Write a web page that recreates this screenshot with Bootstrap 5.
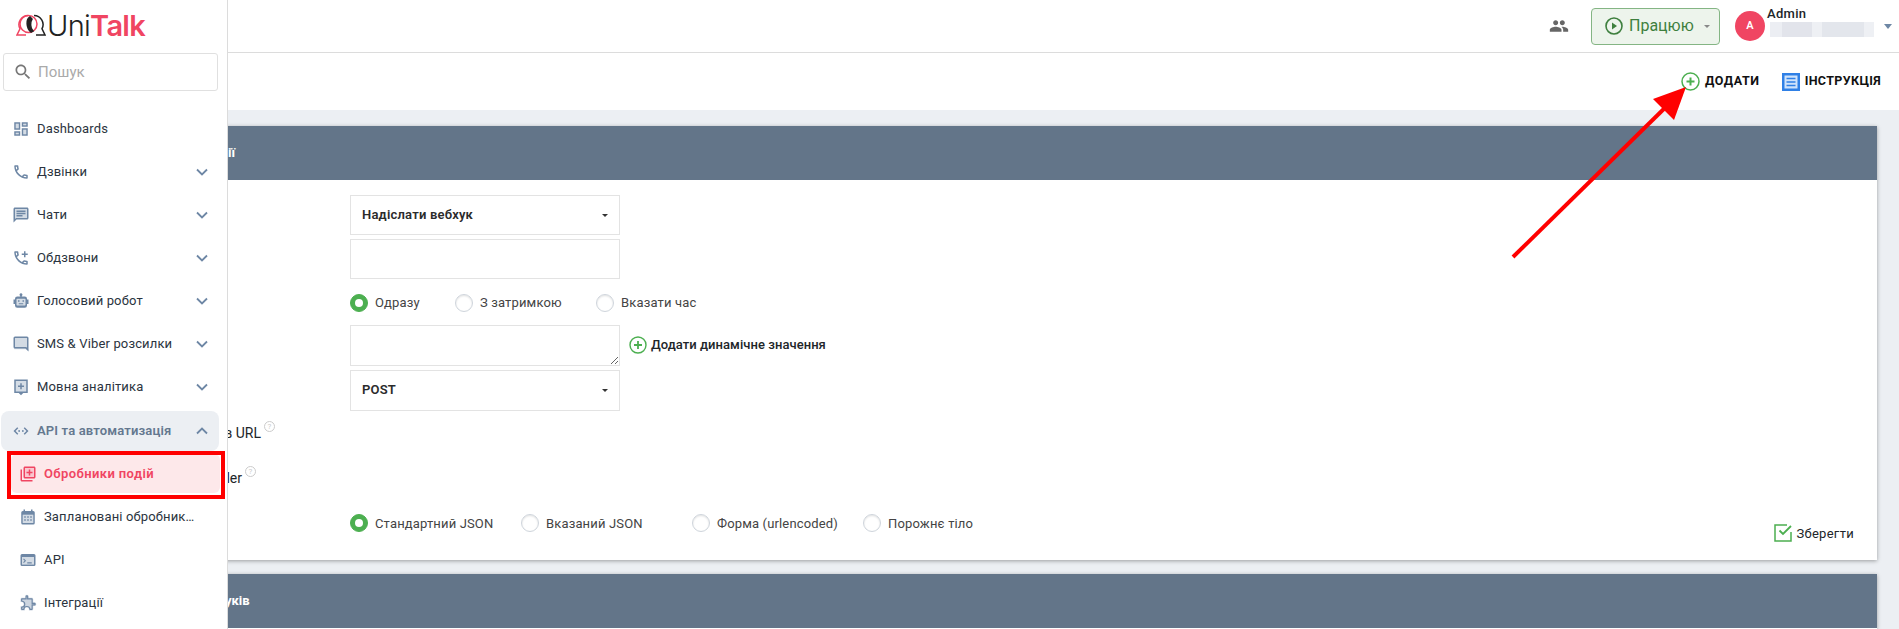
<!DOCTYPE html>
<html lang="uk">
<head>
<meta charset="utf-8">
<title>UniTalk</title>
<link href="https://cdn.jsdelivr.net/npm/bootstrap@5.3.0/dist/css/bootstrap.min.css" rel="stylesheet">
<style>
html,body{height:629px;overflow:hidden;}
body{position:relative;background:#eceff3;font-family:Roboto,"Liberation Sans",sans-serif;color:#212529;}
.side-panel{position:absolute;left:0;top:0;bottom:0;width:228px;background:#fff;border-right:1px solid #dcdcdc;z-index:5;}
.logo-row{height:53px;padding:14px 0 0 16px;gap:1px;}
.logo-word{font-family:Inter,Roboto,sans-serif;font-size:29px;line-height:24px;font-weight:300;color:#222;letter-spacing:-.7px;}
.logo-word b{font-weight:600;color:#f04562;}
.search-box{margin-left:3px;width:215px;height:38px;border:1px solid #e0e0e0;border-radius:3px;padding-left:9px;gap:5px;color:#aaa;font-size:15px;}
.menu-list{margin-top:16px;padding:0;list-style:none;}
.menu-line{height:43px;padding:0 17px 0 12px;gap:7px;font-size:13px;letter-spacing:.15px;color:#2b3440;}
.menu-line .ico{width:18px;height:18px;flex:none;color:#6e87a5;}
.menu-line .chev{width:16px;height:16px;margin-left:auto;flex:none;color:#6e87a5;}
.menu-open{margin:3px 8px 0 1px;height:40px;padding:0 9px 0 11px;border-radius:8px;background:#eceff3;color:#64788f;font-weight:600;}
.menu-sub{padding-left:19px;}
.menu-sel{margin:3px 7px 2px 11px;height:39px;padding:0 8px;border-radius:6px;background:#fde8ea;color:#f04562;font-weight:600;letter-spacing:.4px;}
.menu-sel .ico{color:#f04562;}
.red-frame{position:absolute;left:7px;top:451px;width:218px;height:48px;border:4px solid #f00;z-index:6;}
.top-strip{height:53px;background:#fff;border-bottom:1px solid #dcdcdc;padding-right:7px;}
.people-ico{width:20px;height:20px;color:#666;margin-right:22px;}
.work-btn{width:129px;height:37px;padding:0 0 0 13px;gap:6px;background:#edf4ec;border:1px solid #84b584;border-radius:4px;color:#3e7f3e;font-size:16px;margin-right:15px;}
.work-btn::after{margin-left:auto;margin-right:9px;color:#888;border-top-width:.22em;border-left-width:.22em;border-right-width:.22em;}
.avatar-dot{width:30px;height:30px;border-radius:50%;background:#f04562;color:#fff;font-size:11px;font-weight:600;}
.admin-block{width:110px;margin-left:2px;font-size:13px;line-height:13px;font-weight:500;letter-spacing:.3px;margin-top:-9px;}
.blur-bar{display:block;width:104px;height:15px;margin:2px 0 0 3px;background:linear-gradient(90deg,#eceef3 0 12%,#e2e4eb 12% 40%,#eef0f4 40% 50%,#e3e6ec 50% 90%,#eef0f4 90%);}
.admin-caret{width:0;height:0;border:4.5px solid transparent;border-top:5px solid #6e87a5;border-bottom:0;margin-left:7px;}
.action-strip{height:57px;background:#fff;padding-right:18px;gap:22px;font-size:12.5px;font-weight:700;letter-spacing:.35px;color:#111;}
.action-strip .act{gap:5px;}
.act-add{letter-spacing:.6px;}
.sheet{margin:16px 22px 14px 20px;border:0;border-radius:0;box-shadow:0 1px 4px rgba(0,0,0,.35);}
.sheet+.sheet{margin:14px 22px 0 20px;}
.sheet-head{height:54px;background:#637589;color:#fff;font-size:13px;font-weight:700;border:0;border-radius:0!important;}
.head-a{padding:0 0 0 208px;}
.head-b{padding:0 0 0 205px;}
.sheet-body{padding:15px 23px 17px 0;}
.blank-body{height:1px;padding:0;}
.f-row{display:flex;align-items:center;}
.f-lab{width:330px;flex:none;font-size:14px;text-align:right;white-space:nowrap;}
.f-box{width:270px;height:40px;border:1px solid #e3e3e3;border-radius:0;background:#fff;box-shadow:none;}
.pick{display:flex;align-items:center;justify-content:space-between;padding:0 11px;font-size:13px;font-weight:600;letter-spacing:.2px;color:#2b2b2b;}
.pick:hover,.pick:active{background:#fff!important;border-color:#e3e3e3!important;color:#2b2b2b!important;}
.pick::after{color:#333;border-top-width:.28em;border-left-width:.28em;border-right-width:.28em;}
.tall{height:41px;}
.radio-set{display:flex;align-items:center;font-size:13px;letter-spacing:.15px;color:#444;}
.radio-set label{display:flex;align-items:center;gap:7px;white-space:nowrap;}
.form-check-input.rd{width:18px;height:18px;margin:0;flex:none;border:1px solid #cfd5dc;box-shadow:inset 0 1px 2px rgba(0,0,0,.12);}
.form-check-input.rd:checked{background-color:#4caf50;border-color:#4caf50;box-shadow:none;background-size:auto;}
.r105{width:105px;}.r141{width:141px;}.r171{width:171px;}
.dyn{margin-left:9px;gap:4px;font-size:13px;font-weight:500;letter-spacing:.05px;}
.tip-q{width:11px;height:11px;border:1px solid #ccc;border-radius:50%;font-size:8px;line-height:9px;color:#ccc;text-align:center;margin:-14px 0 0 3px;flex:none;}
.save-link{margin-left:auto;margin-top:10px;gap:3px;font-size:13px;letter-spacing:.3px;}
.mark-arrow{position:absolute;left:1500px;top:80px;z-index:4;}
.radio-row-a{margin-top:14px;}
.ta-row{margin-top:12px;}
.row-url{height:20px;margin-top:13px;}
.row-han{height:20px;margin-top:25px;}
.row-last{margin-top:25px;}
.lab-a{width:241px;}
.lab-b{width:222px;}
</style>
</head>
<body>
<aside class="side-panel">
  <div class="logo-row d-flex align-items-start">
    <svg width="30" height="24" viewBox="0 0 30 24" fill="none" stroke-width="1.5"><path d="M12 1.500a9 9 0 0 0-8 13.200L1 21h9" stroke="#f04562"/><path d="M18 1.500a9 9 0 0 1 8 13.200l3 6.300h-9" stroke="#222"/><circle cx="12.500" cy="10" r="8.500" stroke="#f04562"/><path d="M14 3c-4 2-4 11 1 15l2-1c-3-3-3-9-1-12z" fill="#222" stroke="#222"/></svg>
    <span class="logo-word">Uni<b>Talk</b></span>
  </div>
  <div class="search-box d-flex align-items-center">
    <svg width="20" height="20" viewBox="0 0 24 24" fill="#777"><path d="M15.500 14h-.79l-.28-.27C15.410 12.590 16 11.110 16 9.500 16 5.910 13.090 3 9.500 3S3 5.910 3 9.500 5.910 16 9.500 16c1.610 0 3.090-.59 4.230-1.570l.27.28v.79l5 4.990L20.490 19l-4.990-5zm-6 0C7.010 14 5 11.990 5 9.500S7.010 5 9.500 5 14 7.010 14 9.500 11.990 14 9.500 14z"/></svg>
    <span>Пошук</span>
  </div>
  <ul class="menu-list">
    <li class="menu-line d-flex align-items-center"><svg class="ico" viewBox="0 0 24 24" fill="currentColor"><path d="M5 5h4v6H5zM15 5h4v2h-4zM15 13h4v6h-4zM5 17h4v2H5z" opacity=".3"/><path d="M19 5v2h-4V5h4M9 5v6H5V5h4m10 8v6h-4v-6h4M9 17v2H5v-2h4M21 3h-8v6h8V3zM11 3H3v10h8V3zm10 8h-8v10h8V11zm-10 4H3v6h8v-6z"/></svg><span>Dashboards</span></li>
    <li class="menu-line d-flex align-items-center"><svg class="ico" viewBox="0 0 24 24" fill="currentColor"><path d="M6.540 5c.06.89.21 1.760.45 2.590l-1.200 1.200c-.41-1.200-.67-2.470-.76-3.790h1.510m9.860 12.020c.85.24 1.720.39 2.600.45v1.490c-1.320-.09-2.590-.35-3.800-.75l1.200-1.190M7.500 3H4c-.55 0-1 .45-1 1 0 9.390 7.610 17 17 17 .55 0 1-.45 1-1v-3.490c0-.55-.45-1-1-1-1.240 0-2.450-.2-3.570-.57-.1-.04-.21-.05-.31-.05-.26 0-.51.1-.71.29l-2.200 2.200c-2.830-1.450-5.150-3.760-6.590-6.590l2.200-2.200c.28-.28.36-.67.25-1.020C8.700 6.450 8.500 5.250 8.500 4c0-.55-.45-1-1-1z"/></svg><span>Дзвінки</span><svg class="chev" viewBox="0 0 16 16" fill="none" stroke="currentColor" stroke-width="1.800"><path d="M3 5.500l5 5 5-5"/></svg></li>
    <li class="menu-line d-flex align-items-center"><svg class="ico" viewBox="0 0 24 24" fill="currentColor"><path d="M4 4h16v12H5.170L4 17.170z" opacity=".3"/><path d="M20 2H4c-1.100 0-2 .9-2 2v18l4-4h14c1.100 0 2-.9 2-2V4c0-1.100-.9-2-2-2zm0 14H5.170L4 17.170V4h16v12zM6 12h8v2H6zm0-3h12v2H6zm0-3h12v2H6z"/></svg><span>Чати</span><svg class="chev" viewBox="0 0 16 16" fill="none" stroke="currentColor" stroke-width="1.800"><path d="M3 5.500l5 5 5-5"/></svg></li>
    <li class="menu-line d-flex align-items-center"><svg class="ico" viewBox="0 0 24 24" fill="currentColor"><path d="M6.540 5c.06.89.21 1.760.45 2.590l-1.200 1.200c-.41-1.200-.67-2.470-.76-3.790h1.510m9.860 12.020c.85.24 1.720.39 2.600.45v1.490c-1.320-.09-2.590-.35-3.800-.75l1.200-1.190M7.500 3H4c-.55 0-1 .45-1 1 0 9.390 7.610 17 17 17 .55 0 1-.45 1-1v-3.490c0-.55-.45-1-1-1-1.240 0-2.450-.2-3.570-.57-.1-.04-.21-.05-.31-.05-.26 0-.51.1-.71.29l-2.200 2.200c-2.830-1.450-5.150-3.760-6.590-6.590l2.200-2.200c.28-.28.36-.67.25-1.020C8.700 6.450 8.500 5.250 8.500 4c0-.55-.45-1-1-1zM16 3h2v3h3v2h-3v3h-2V8h-3V6h3z"/></svg><span>Обдзвони</span><svg class="chev" viewBox="0 0 16 16" fill="none" stroke="currentColor" stroke-width="1.800"><path d="M3 5.500l5 5 5-5"/></svg></li>
    <li class="menu-line d-flex align-items-center"><svg class="ico" viewBox="0 0 24 24" fill="currentColor"><path d="M12 1.500a2 2 0 0 1 1 3.700V6h4a3 3 0 0 1 3 3v1h2v6h-2v2a3 3 0 0 1-3 3H7a3 3 0 0 1-3-3v-2H2v-6h2V9a3 3 0 0 1 3-3h4v-.8a2 2 0 0 1 1-3.700z"/><path d="M7 9h10a1 1 0 0 1 1 1v7a1 1 0 0 1-1 1H7a1 1 0 0 1-1-1v-7a1 1 0 0 1 1-1z" fill="#d5dde6"/><path d="M8 11h2v2H8zM14 11h2v2h-2zM9 15h6v1.300H9z"/></svg><span>Голосовий робот</span><svg class="chev" viewBox="0 0 16 16" fill="none" stroke="currentColor" stroke-width="1.800"><path d="M3 5.500l5 5 5-5"/></svg></li>
    <li class="menu-line d-flex align-items-center"><svg class="ico" viewBox="0 0 24 24" fill="currentColor"><path d="M3 3h18v16h1v2l-3-2H3z" opacity=".3"/><path d="M4 2h16a2 2 0 0 1 2 2v18l-4-4H4a2 2 0 0 1-2-2V4a2 2 0 0 1 2-2zm0 2v12h15l1 1V4z"/></svg><span>SMS &amp; Viber розсилки</span><svg class="chev" viewBox="0 0 16 16" fill="none" stroke="currentColor" stroke-width="1.800"><path d="M3 5.500l5 5 5-5"/></svg></li>
    <li class="menu-line d-flex align-items-center"><svg class="ico" viewBox="0 0 24 24" fill="currentColor"><path d="M3 2h18v18h-6l-3 3-3-3H3z"/><path d="M5 4h14v14H5z" fill="#d5dde6"/><path d="M11 7h2v3h3v2h-3v3h-2v-3H8v-2h3z"/></svg><span>Мовна аналітика</span><svg class="chev" viewBox="0 0 16 16" fill="none" stroke="currentColor" stroke-width="1.800"><path d="M3 5.500l5 5 5-5"/></svg></li>
    <li class="menu-line menu-open d-flex align-items-center"><svg class="ico" viewBox="0 0 24 24" fill="currentColor"><path d="M7 7l1.400 1.400L4.800 12l3.600 3.600L7 17l-5-5zM17 7l-1.400 1.400 3.600 3.600-3.600 3.600L17 17l5-5z"/><circle cx="9.500" cy="12" r="1.200"/><circle cx="14.500" cy="12" r="1.200"/></svg><span>API та автоматизація</span><svg class="chev" viewBox="0 0 16 16" fill="none" stroke="currentColor" stroke-width="1.800"><path d="M3 10.500l5-5 5 5"/></svg></li>
    <li class="menu-line menu-sel d-flex align-items-center"><svg class="ico" viewBox="0 0 24 24" fill="currentColor"><path d="M8 4h12v12H8z" opacity=".2"/><path d="M4 6H2v14c0 1.100.9 2 2 2h14v-2H4V6zm16-4H8c-1.100 0-2 .9-2 2v12c0 1.100.9 2 2 2h12c1.100 0 2-.9 2-2V4c0-1.100-.9-2-2-2zm0 14H8V4h12v12zm-7-2h2v-3h3V9h-3V6h-2v3h-3v2h3z"/></svg><span>Обробники подій</span></li>
    <li class="menu-line menu-sub d-flex align-items-center"><svg class="ico" viewBox="0 0 24 24" fill="currentColor"><path d="M5 9h14v11H5z" opacity=".3"/><path d="M19 4h-1V2h-2v2H8V2H6v2H5a2 2 0 0 0-2 2v14a2 2 0 0 0 2 2h14a2 2 0 0 0 2-2V6a2 2 0 0 0-2-2zm0 16H5V9h14zM7 11h2v2H7zm4 0h2v2h-2zm4 0h2v2h-2zm-8 4h2v2H7zm4 0h2v2h-2zm4 0h2v2h-2z"/></svg><span>Заплановані обробник…</span></li>
    <li class="menu-line menu-sub d-flex align-items-center"><svg class="ico" viewBox="0 0 24 24" fill="currentColor"><path d="M4 8h16v10H4z" opacity=".3"/><path d="M20 4H4a2 2 0 0 0-2 2v12a2 2 0 0 0 2 2h16a2 2 0 0 0 2-2V6a2 2 0 0 0-2-2zm0 14H4V8h16zM6.500 10l3 3-3 3-1-1 2-2-2-2zM11 15h6v1.500h-6z"/></svg><span>API</span></li>
    <li class="menu-line menu-sub d-flex align-items-center"><svg class="ico" viewBox="0 0 24 24" fill="currentColor"><path d="M20.500 11H19V7c0-1.100-.9-2-2-2h-4V3.500C13 2.120 11.880 1 10.500 1S8 2.120 8 3.500V5H4c-1.100 0-1.990.9-1.990 2v3.800H3.500c1.490 0 2.700 1.210 2.700 2.700s-1.210 2.700-2.700 2.700H2V20c0 1.100.9 2 2 2h3.800v-1.500c0-1.490 1.210-2.700 2.700-2.700 1.490 0 2.700 1.210 2.700 2.700V22H17c1.100 0 2-.9 2-2v-4h1.500c1.380 0 2.500-1.120 2.500-2.500S21.880 11 20.500 11z" opacity=".35"/><path d="M10.500 2.500c.55 0 1 .45 1 1v3H17a.5.500 0 0 1 .5.500v5.500h3a1 1 0 0 1 0 2h-3V20a.5.500 0 0 1-.5.500h-2.300c-.3-2.200-2-3.900-4.200-3.900s-3.900 1.700-4.200 3.900H4a.5.500 0 0 1-.5-.5v-2.400c2.200-.3 4.200-2 4.200-4.100s-2-3.800-4.200-4.100V7a.5.500 0 0 1 .5-.5h5.500v-3c0-.55.45-1 1-1z" fill="none" stroke="currentColor" stroke-width="1.500"/></svg><span>Інтеграції</span></li>
  </ul>
</aside>
<div class="red-frame"></div>

<header class="top-strip d-flex align-items-center justify-content-end">
  <svg class="people-ico" viewBox="0 0 24 24" fill="currentColor"><path d="M16 11c1.660 0 2.990-1.340 2.990-3S17.660 5 16 5c-1.660 0-3 1.340-3 3s1.340 3 3 3zm-8 0c1.660 0 2.990-1.340 2.990-3S9.660 5 8 5C6.340 5 5 6.340 5 8s1.340 3 3 3zm0 2c-2.330 0-7 1.170-7 3.500V19h14v-2.500c0-2.330-4.670-3.500-7-3.500zm8 0c-.29 0-.62.02-.97.05 1.160.84 1.970 1.970 1.970 3.450V19h6v-2.500c0-2.330-4.670-3.500-7-3.500z"/></svg>
  <button type="button" class="btn dropdown-toggle work-btn d-flex align-items-center">
    <svg width="18" height="18" viewBox="0 0 18 18" fill="none" stroke="currentColor" stroke-width="1.600"><circle cx="9" cy="9" r="8"/><path d="M7 5.500l5 3.500-5 3.500z" fill="currentColor" stroke="none"/></svg>
    <span>Працюю</span>
  </button>
  <span class="avatar-dot d-flex align-items-center justify-content-center">A</span>
  <span class="admin-block"><span>Admin</span><span class="blur-bar"></span></span>
  <span class="admin-caret"></span>
</header>

<div class="action-strip d-flex align-items-center justify-content-end">
  <span class="act act-add d-flex align-items-center">
    <svg width="19" height="19" viewBox="0 0 19 19" fill="none" stroke="#4caf50" stroke-width="1.500"><circle cx="9.500" cy="9.500" r="8.500"/><path d="M9.500 5.500v8M5.500 9.500h8" stroke-width="2"/></svg>ДОДАТИ
  </span>
  <span class="act d-flex align-items-center">
    <svg width="18" height="18" viewBox="0 0 18 18"><rect width="18" height="18" fill="#2f80e6"/><rect x="2.500" y="2.500" width="13" height="13" fill="#cfe3fb"/><path d="M4.500 5.500h9M4.500 9h9M4.500 12.500h9" stroke="#2f80e6" stroke-width="1.500"/></svg>ІНСТРУКЦІЯ
  </span>
</div>

<svg class="mark-arrow" width="200" height="190" viewBox="0 0 200 190"><path d="M13 177L175 18" stroke="#f00" stroke-width="4" fill="none"/><path d="M186 7l-12 33-21-21z" fill="#f00"/></svg>

<main>
  <section class="card sheet">
    <div class="card-header sheet-head head-a d-flex align-items-center">ії</div>
    <div class="card-body sheet-body">
      <div class="f-row"><div class="f-lab"></div><button type="button" class="btn dropdown-toggle f-box pick">Надіслати вебхук</button></div>
      <div class="f-row mt-1"><div class="f-lab"></div><input type="text" class="form-control f-box" aria-label="URL"></div>
      <div class="f-row radio-row-a"><div class="f-lab"></div>
        <div class="radio-set">
          <label class="r105"><input class="form-check-input rd" type="radio" name="t" checked>Одразу</label>
          <label class="r141"><input class="form-check-input rd" type="radio" name="t">З затримкою</label>
          <label><input class="form-check-input rd" type="radio" name="t">Вказати час</label>
        </div>
      </div>
      <div class="f-row ta-row"><div class="f-lab"></div><textarea class="form-control f-box tall" aria-label="Body"></textarea>
        <span class="dyn d-flex align-items-center"><svg width="18" height="18" viewBox="0 0 18 18" fill="none" stroke="#4caf50" stroke-width="1.400"><circle cx="9" cy="9" r="8"/><path d="M9 5v8M5 9h8" stroke-width="1.800"/></svg>Додати динамічне значення</span>
      </div>
      <div class="f-row mt-1"><div class="f-lab"></div><button type="button" class="btn dropdown-toggle f-box pick tall">POST</button></div>
      <div class="f-row row-url"><div class="f-lab lab-a">в URL</div><span class="tip-q">?</span></div>
      <div class="f-row row-han"><div class="f-lab lab-b">ler</div><span class="tip-q">?</span></div>
      <div class="f-row row-last align-items-start"><div class="f-lab"></div>
        <div class="radio-set">
          <label class="r171"><input class="form-check-input rd" type="radio" name="b" checked>Стандартний JSON</label>
          <label class="r171"><input class="form-check-input rd" type="radio" name="b">Вказаний JSON</label>
          <label class="r171"><input class="form-check-input rd" type="radio" name="b">Форма (urlencoded)</label>
          <label><input class="form-check-input rd" type="radio" name="b">Порожнє тіло</label>
        </div>
        <span class="save-link d-flex align-items-center"><svg width="19" height="18" viewBox="0 0 19 18" fill="none" stroke="#4caf50" stroke-width="1.500"><path d="M13 1H1v16h16V8"/><path d="M5.500 6.500L9 10l8-8" stroke-width="1.800"/></svg>Зберегти</span>
      </div>
    </div>
  </section>
  <section class="card sheet">
    <div class="card-header sheet-head head-b d-flex align-items-center">уків</div>
    <div class="card-body blank-body"></div>
  </section>
</main>
</body>
</html>
